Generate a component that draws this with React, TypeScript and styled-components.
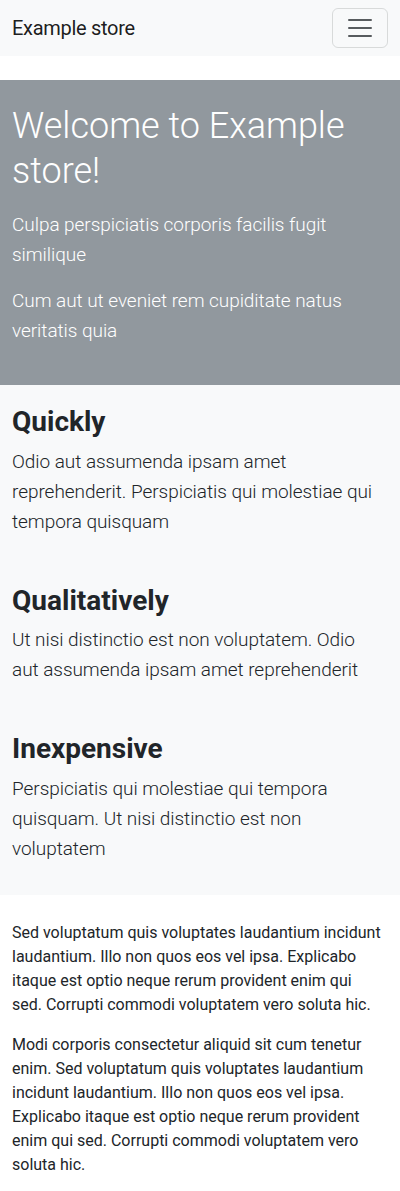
import React from "react";
import styled, { createGlobalStyle } from "styled-components";

const GlobalStyle = createGlobalStyle`
	* {
		box-sizing: border-box;
	}
	body {
		margin: 0;
		background: #fff;
		color: #212529;
		font-family: Roboto, "Noto Sans", "Liberation Sans", Arial, sans-serif;
		font-size: 16px;
		line-height: 1.5;
	}
`;

// \u00a0 keeps a couple of words together so lines break where the design does
const features = [
	{
		title: "Quickly",
		text: "Odio aut assumenda ipsam amet reprehenderit. Perspiciatis qui molestiae qui tempora quisquam",
	},
	{
		title: "Qualitatively",
		text: "Ut nisi distinctio est non voluptatem. Odio aut\u00a0assumenda ipsam amet reprehenderit",
	},
	{
		title: "Inexpensive",
		text: "Perspiciatis qui molestiae qui tempora quisquam. Ut nisi distinctio est non voluptatem",
	},
];

const paragraphs = [
	"Sed voluptatum quis voluptates laudantium incidunt laudantium. Illo non quos eos vel ipsa. Explicabo itaque est optio neque rerum provident enim qui sed.\u00a0Corrupti commodi voluptatem vero soluta hic.",
	"Modi corporis consectetur aliquid sit cum tenetur enim. Sed voluptatum quis voluptates laudantium incidunt laudantium. Illo non quos eos vel ipsa. Explicabo itaque est optio neque rerum provident enim qui sed. Corrupti commodi voluptatem vero soluta hic.",
];

const TogglerIcon = () => (
	<svg width="30" height="30" viewBox="0 0 30 30" aria-hidden="true">
		<path
			d="M4 7h22M4 15h22M4 23h22"
			stroke="rgba(33, 37, 41, 0.75)"
			strokeWidth="2"
			strokeLinecap="round"
			strokeMiterlimit="10"
		/>
	</svg>
);

export default function App() {
	return (
		<>
			<GlobalStyle />
			<Navbar>
				<Brand href="#">Example store</Brand>
				<Toggler type="button" aria-label="Toggle navigation">
					<TogglerIcon />
				</Toggler>
			</Navbar>

			<Hero>
				<HeroTitle>Welcome to Example store!</HeroTitle>
				<Lead $light>Culpa perspiciatis corporis facilis fugit similique</Lead>
				<Lead $light>Cum aut ut eveniet rem cupiditate natus veritatis quia</Lead>
			</Hero>

			<Features>
				{features.map(({ title, text }) => (
					<Feature key={title}>
						<FeatureTitle>{title}</FeatureTitle>
						<Lead>{text}</Lead>
					</Feature>
				))}
			</Features>

			<TextBlock>
				{paragraphs.map((p, i) => (
					<Paragraph key={i}>{p}</Paragraph>
				))}
			</TextBlock>
		</>
	);
}

// style 영역
const Navbar = styled.nav`
	display: flex;
	align-items: center;
	justify-content: space-between;
	height: 56px;
	padding: 8px 12px;
	margin-bottom: 24px;
	background: #f8f9fa;
`;

const Brand = styled.a`
	font-size: 20px;
	line-height: 30px;
	padding: 5px 0;
	color: rgba(0, 0, 0, 0.9);
	text-decoration: none;
	letter-spacing: -0.3px;
`;

const Toggler = styled.button`
	display: flex;
	align-items: center;
	justify-content: center;
	width: 56px;
	height: 40px;
	padding: 4px 12px;
	background: transparent;
	border: 1px solid rgba(33, 37, 41, 0.15);
	border-radius: 6px;
	cursor: pointer;
`;

const Hero = styled.section`
	background: #91989e;
	padding: 24px 12px 23px;
	color: #fff;
`;

const HeroTitle = styled.h1`
	margin: 0 0 16px;
	font-size: 36px;
	font-weight: 300;
	line-height: 45px;
`;

const Lead = styled.p<{ $light?: boolean }>`
	margin: 0 0 ${({ $light }) => ($light ? "16px" : "0")};
	font-size: 19px;
	font-weight: 300;
	line-height: 30px;
	letter-spacing: -0.05px;
	color: ${({ $light }) => ($light ? "#fff" : "#212529")};
`;

const Features = styled.section`
	display: flex;
	flex-direction: column;
	gap: 47px;
	padding: 20px 12px 31px;
	background: #f8f9fa;
`;

const Feature = styled.div`
	display: flex;
	flex-direction: column;
`;

const FeatureTitle = styled.h2`
	margin: 0 0 8px;
	font-size: 28px;
	font-weight: 700;
	line-height: 1.2;
`;

const TextBlock = styled.section`
	padding: 26px 12px 0;
`;

const Paragraph = styled.p`
	margin: 0 0 16px;
	font-size: 16px;
	line-height: 24px;
`;
